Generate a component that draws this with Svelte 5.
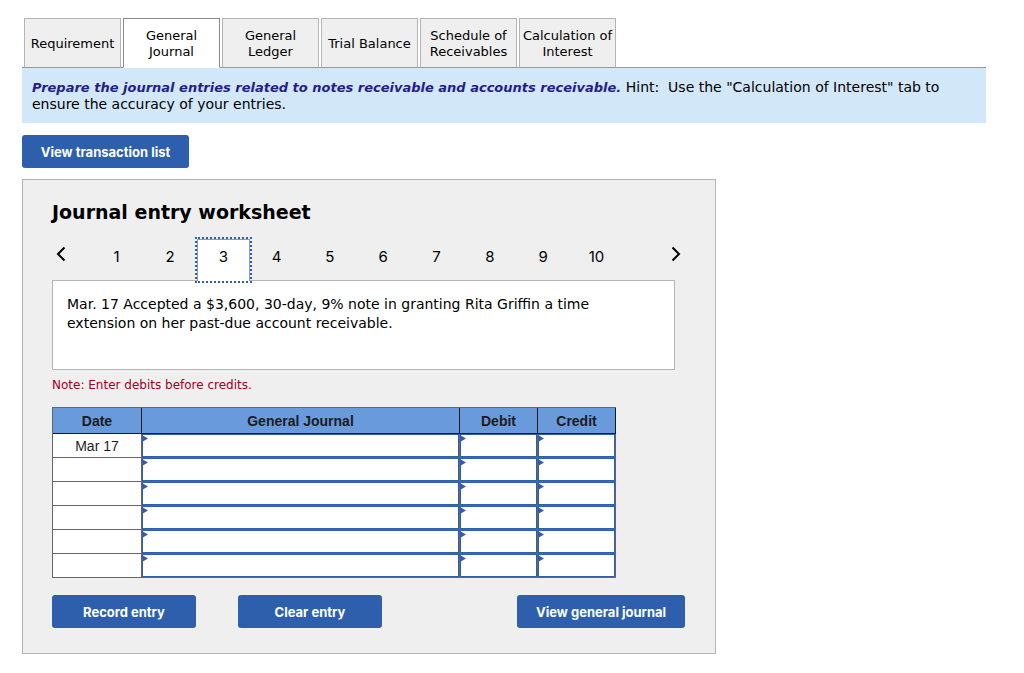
<script>
  const tabs = [
    'Requirement',
    'General Journal',
    'General Ledger',
    'Trial Balance',
    'Schedule of Receivables',
    'Calculation of Interest'
  ];
  const pages = [1, 2, 3, 4, 5, 6, 7, 8, 9, 10];
  const columns = ['General Journal', 'Debit', 'Credit'];
  let activeTab = $state('General Journal');
  let activePage = $state(3);
  let rows = $state(
    ['Mar 17', '', '', '', '', ''].map((date) => ({ date, values: ['', '', ''] }))
  );
</script>

<main>
  <nav class="tabs">
    {#each tabs as tab}
      <button class="tab" class:active={tab === activeTab} onclick={() => (activeTab = tab)}>{tab}</button>
    {/each}
  </nav>
  <p class="prompt">
    <strong>Prepare the journal entries related to notes receivable and accounts receivable.</strong>
    Hint:&nbsp; Use the "Calculation of Interest" tab to ensure the accuracy of your entries.
  </p>

  <button class="action list">View transaction list</button>

  <section class="panel">
    <h1>Journal entry worksheet</h1>
    <div class="pager">
      <button class="arrow" aria-label="Previous">
        <svg width="10" height="16" viewBox="0 0 10 16"><path d="M8.5 1.5 L2 8 L8.5 14.5" /></svg>
      </button>
      <div class="pages">
        {#each pages as page}
          <button class="page" class:current={page === activePage} onclick={() => (activePage = page)}>{page}</button>
        {/each}
      </div>
      <button class="arrow" aria-label="Next">
        <svg width="10" height="16" viewBox="0 0 10 16"><path d="M1.5 1.5 L8 8 L1.5 14.5" /></svg>
      </button>
    </div>
    <div class="transaction">
      Mar. 17 Accepted a $3,600, 30-day, 9% note in granting Rita Griffin a time extension on her past-due account receivable.
    </div>
    <p class="note">Note: Enter debits before credits.</p>

    <table>
      <colgroup>
        <col class="date-col" />
        <col />
        <col class="amount-col" />
        <col class="amount-col" />
      </colgroup>
      <thead>
        <tr>
          <th>Date</th>
          {#each columns as column}
            <th>{column}</th>
          {/each}
        </tr>
      </thead>
      <tbody>
        {#each rows as row, r}
          <tr>
            <td>{row.date}</td>
            {#each columns as column, c}
              <td class="entry">
                <input type="text" aria-label={`${column}, row ${r + 1}`} bind:value={row.values[c]} />
              </td>
            {/each}
          </tr>
        {/each}
      </tbody>
    </table>

    <div class="actions">
      <button class="action">Record entry</button>
      <button class="action">Clear entry</button>
      <button class="action journal">View general journal</button>
    </div>
  </section>
</main>

<style>
  :global(body) {
    background: #fff;
  }
  main {
    padding: 18px 38px 18px 22px;
    font-family: Verdana, 'DejaVu Sans', sans-serif;
    font-size: 13px;
    color: #000;
  }
  button {
    font: inherit;
    color: inherit;
    margin: 0;
    cursor: pointer;
  }
  .tabs {
    display: grid;
    grid-template-columns: repeat(6, 97px);
    gap: 2px;
    padding-left: 2px;
    background: linear-gradient(#999, #999) bottom / 100% 1px no-repeat;
  }
  .tab {
    height: 50px;
    padding: 2px 0 0;
    border: 1px solid #b4b4b4;
    border-bottom-color: #999;
    background: #efefef;
    line-height: 16px;
  }
  .tab.active {
    background: #fff;
    border-color: #8a8a8a;
    border-bottom-color: #fff;
  }
  .prompt {
    margin: 0 0 12px;
    padding: 11px 10px 10px;
    background: #d2e7f8;
    font-size: 14px;
    line-height: 17px;
  }
  .prompt strong {
    font-size: 13px;
    font-style: italic;
    color: #251e87;
  }
  .action {
    height: 33px;
    padding: 0 18px;
    border: 0;
    border-radius: 3px;
    background: #2d5fac;
    color: #fff;
    font: 700 13px Inter, sans-serif;
    white-space: nowrap;
  }
  .list {
    display: block;
    min-width: 167px;
  }
  .panel {
    box-sizing: border-box;
    width: 72%;
    min-width: 660px;
    margin-top: 11px;
    padding: 20px 40px 25px 29px;
    border: 1px solid #b4b4b4;
    background: #efefef;
  }
  h1 {
    margin: 0 0 15px;
    font-size: 19px;
    line-height: 24px;
    font-weight: 700;
  }
  .pager {
    display: flex;
    align-items: flex-start;
    justify-content: space-between;
    height: 41px;
    padding-right: 1px;
  }
  .arrow {
    padding: 7px 4px;
    border: 0;
    background: none;
    line-height: 0;
  }
  .arrow:last-child {
    padding-right: 0;
    margin-right: -7px;
  }
  .arrow path {
    fill: none;
    stroke: #000;
    stroke-width: 2;
  }
  .pages {
    flex: 1;
    display: grid;
    grid-template-columns: repeat(10, 1fr);
    margin: 0 44px 0 20px;
  }
  .page {
    height: 42px;
    padding: 0 0 8px;
    border: 1px solid transparent;
    border-bottom: 0;
    background: none;
    font: 15px Inter, sans-serif;
  }
  .page.current {
    position: relative;
    border-color: #999;
    background: #fff;
    outline: 2px dotted #2d5fac;
  }
  .transaction {
    min-height: 60px;
    padding: 14px 64px 14px 14px;
    border: 1px solid #b4b4b4;
    background: #fff;
    font-size: 14px;
    line-height: 19px;
  }
  .note {
    margin: 7px 0 14px;
    font-size: 12px;
    line-height: 16px;
    color: #a0001c;
  }
  table {
    width: 564px;
    table-layout: fixed;
    border: solid #666;
    border-width: 1px 0 0 1px;
    border-collapse: separate;
    border-spacing: 0;
    font: 14px 'Liberation Sans', Arial, sans-serif;
    color: #1c1c1c;
  }
  .date-col {
    width: 89px;
  }
  .amount-col {
    width: 78px;
  }
  th,
  td {
    box-sizing: border-box;
    height: 24px;
    padding: 0;
    border: solid #666;
    border-width: 0 1px 1px 0;
    background: #fff;
    line-height: 16px;
    text-align: center;
  }
  th {
    height: 26px;
    border-color: #1a1a1a;
    background: #699adc;
  }
  .entry {
    position: relative;
  }
  .entry::before {
    content: '';
    position: absolute;
    top: 1px;
    left: 0;
    width: 6px;
    height: 7px;
    background: #2d5fac;
    clip-path: polygon(0 0, 100% 50%, 0 100%);
  }
  input {
    display: block;
    box-sizing: border-box;
    width: 100%;
    height: 23px;
    margin: 0;
    padding: 0 8px;
    border: 1px solid #2d5fac;
    border-radius: 0;
    background: #fff;
    font: inherit;
  }
  .actions {
    display: flex;
    gap: 42px;
    margin: 17px -10px 0 0;
  }
  .actions .action {
    min-width: 144px;
  }
  .actions .journal {
    min-width: 168px;
    margin-left: auto;
  }
</style>
